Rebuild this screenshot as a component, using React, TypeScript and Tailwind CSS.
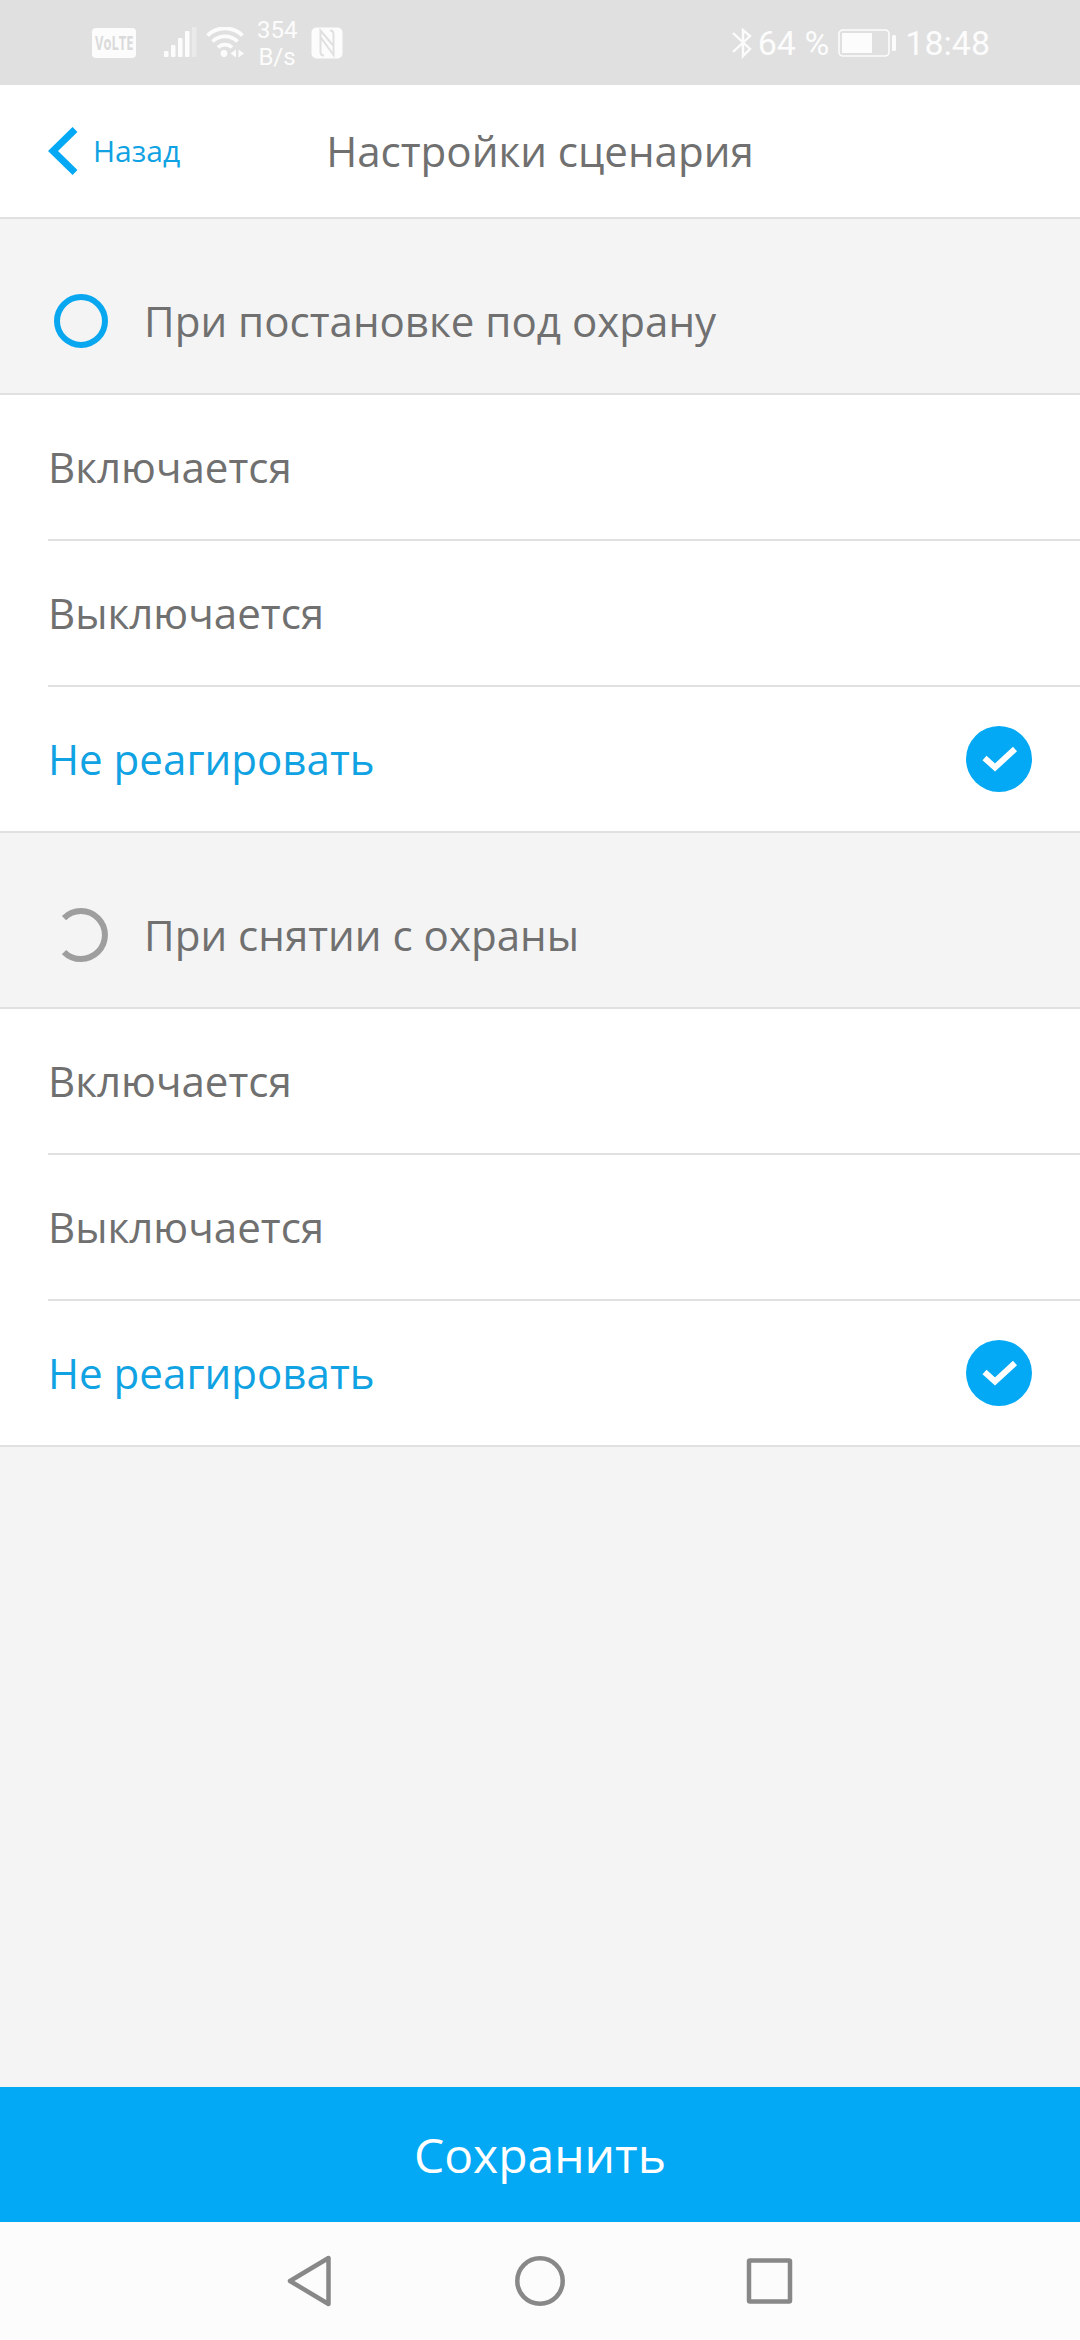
import { useState } from "react";
import type { ReactNode } from "react";

const OPTIONS = ["Включается", "Выключается", "Не реагировать"];

function StatusBar() {
  return (
    <div className="h-[85px] bg-[#e0e0e0] flex items-center justify-between pl-[92px] pr-[90px] text-[#fcfcfc] font-[Roboto,sans-serif]">
      <div className="flex items-center h-full">
        <div className="w-11 h-[30px] rounded bg-[#fcfcfc] flex items-center justify-center shrink-0">
          <span className="text-[19px] leading-[28px] font-bold text-[#dadada] font-['Open_Sans',sans-serif] scale-x-[0.68]">
            VoLTE
          </span>
        </div>
        <svg width="34" height="32" viewBox="0 0 34 32" className="ml-7 shrink-0" fill="currentColor">
          <rect x="0" y="24" width="4.500" height="6" rx="1" />
          <rect x="7" y="18" width="4.500" height="12" rx="1" />
          <rect x="14" y="11" width="4.500" height="19" rx="1" />
          <rect x="21" y="4" width="4.500" height="26" rx="1" />
          <rect x="28" y="-1" width="4.500" height="31" rx="1" opacity="0.35" />
        </svg>
        <svg width="38" height="32" viewBox="0 0 38 32" className="ml-2 shrink-0" fill="none" stroke="currentColor" strokeWidth="3.800">
          <path d="M1.500 8.500a25 25 0 0 1 35 0" />
          <path d="M6.500 14.500a18 18 0 0 1 25 0" />
          <path d="M12 20.500a10 10 0 0 1 14 0" />
          <circle cx="18" cy="26.500" r="3.400" fill="currentColor" stroke="none" />
          <path d="M30 22.500v8l-5.500-4zM32.500 22.500v8l5.500-4z" fill="currentColor" stroke="none" />
        </svg>
        <div className="ml-[13px] pt-[2px] w-10 text-center text-[24px] leading-[27px] whitespace-nowrap">
          354
          <br />
          B/s
        </div>
        <svg width="32" height="32" viewBox="0 0 32 32" className="ml-[14px] shrink-0">
          <rect x="0.500" y="0.500" width="31" height="31" rx="5" fill="#fcfcfc" />
          <path
            d="M13 28.500q-3.500 0-3.500-3.500V3.500L22.500 19V7M9.500 10L22.500 28V7q0-3.500-3.500-3.500"
            fill="none"
            stroke="#e0e0e0"
            strokeWidth="2"
          />
        </svg>
      </div>
      <div className="flex items-center h-full">
        <svg width="20" height="32" viewBox="0 0 20 32" fill="none" stroke="currentColor" strokeWidth="2.400">
          <path d="M1 6l17 16-7 7V3l7 6L1 25" />
        </svg>
        <span className="ml-[6px] text-[34px] leading-none whitespace-nowrap">64 %</span>
        <svg width="60" height="30" viewBox="0 0 60 30" className="ml-2" fill="currentColor">
          <rect x="2" y="2" width="50" height="26" rx="4" fill="none" stroke="currentColor" strokeWidth="1.600" />
          <rect x="5" y="5" width="30" height="20" />
          <rect x="55" y="7" width="4" height="16" rx="1.500" />
        </svg>
        <span className="ml-2 text-[34px] leading-none">18:48</span>
      </div>
    </div>
  );
}

function SectionHeader({ icon, title }: { icon: ReactNode; title: string }) {
  return (
    <div className="h-[176px] pt-[30px] pl-[54px] flex items-center gap-9 border-b-2 border-[#e0e0e0]">
      {icon}
      <h2 className="text-[42.1px] leading-[58px] text-[#707070]">{title}</h2>
    </div>
  );
}

function OptionList({ value, onChange }: { value: string; onChange: (v: string) => void }) {
  return (
    <div className="bg-white border-b-2 border-[#e0e0e0]">
      {OPTIONS.map((option, i) => (
        <button
          key={option}
          onClick={() => onChange(option)}
          className="block w-full pl-12 text-left text-[42.1px] leading-[58px]"
        >
          <div className={`flex items-center justify-between pr-12 ${i > 0 ? "h-[146px] border-t-2 border-[#e0e0e0]" : "h-[144px]"}`}>
            <span className={value === option ? "text-[#10a2e2]" : "text-[#707070]"}>{option}</span>
            {value === option && (
              <svg width="66" height="66" viewBox="0 0 66 66">
                <circle cx="33" cy="33" r="33" fill="#03a9f4" />
                <path d="M18.500 32L29 41.500 49 23" fill="none" stroke="#fff" strokeWidth="6" />
              </svg>
            )}
          </div>
        </button>
      ))}
    </div>
  );
}

export default function App() {
  const [onArm, setOnArm] = useState("Не реагировать");
  const [onDisarm, setOnDisarm] = useState("Не реагировать");

  return (
    <div className="w-[1080px] h-[2340px] flex flex-col bg-[#f4f4f4] font-['Open_Sans',sans-serif]">
      <StatusBar />
      <header className="h-[134px] bg-white border-b-2 border-[#e0e0e0] grid grid-cols-[1fr_auto_1fr] items-center">
        <button className="flex items-center pl-12 gap-[15px] text-[30px] text-[#10a2e2]">
          <svg width="30" height="48" viewBox="0 0 30 48" fill="none" stroke="#03a9f4" strokeWidth="7">
            <path d="M27 2.500L5 24l22 21.500" />
          </svg>
          <span className="pb-[2px]">Назад</span>
        </button>
        <h1 className="text-[42.1px] leading-[58px] text-[#707070]">Настройки сценария</h1>
      </header>

      <main className="flex-1">
        <SectionHeader
          title="При постановке под охрану"
          icon={
            <svg width="54" height="54" viewBox="0 0 54 54" fill="none" stroke="#08a7f0" strokeWidth="6">
              <circle cx="27" cy="27" r="24" />
            </svg>
          }
        />
        <OptionList value={onArm} onChange={setOnArm} />
        <SectionHeader
          title="При снятии с охраны"
          icon={
            <svg width="54" height="54" viewBox="0 0 54 54" fill="none" stroke="#9e9e9e" strokeWidth="6">
              <path d="M10 10a24 24 0 1 1 0 34" />
            </svg>
          }
        />
        <OptionList value={onDisarm} onChange={setOnDisarm} />
      </main>

      <button className="h-[135px] bg-[#03a9f4] text-white text-[48px] leading-[66px]">Сохранить</button>

      <nav className="h-[118px] bg-[#fcfcfc] flex items-center justify-center gap-[179px]">
        <svg width="50" height="54" viewBox="0 0 50 54" fill="none" stroke="#888" strokeWidth="4.500" strokeLinejoin="round">
          <path d="M42.500 4v46L4 27z" />
        </svg>
        <svg width="50" height="54" viewBox="0 0 50 54" fill="none" stroke="#888" strokeWidth="4.500">
          <circle cx="25" cy="27" r="22.700" />
        </svg>
        <svg width="50" height="54" viewBox="0 0 50 54" fill="none" stroke="#888" strokeWidth="4.500" strokeLinejoin="round">
          <rect x="5" y="6.500" width="41" height="41" rx="1" />
        </svg>
      </nav>
    </div>
  );
}
